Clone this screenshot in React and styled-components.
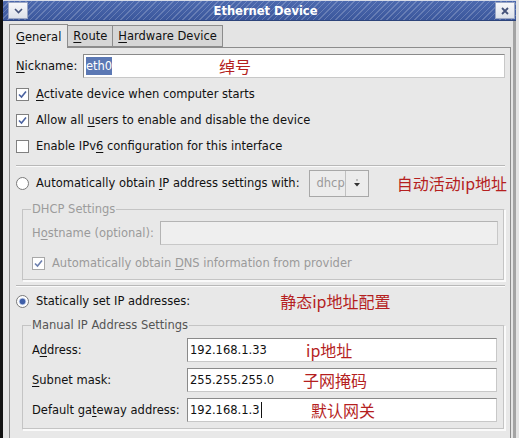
import React from "react";
import styled, { createGlobalStyle } from "styled-components";

const Global = createGlobalStyle`
  html, body { margin: 0; padding: 0; background: #1a1a1a; }
  body { font-family: "DejaVu Sans", "Noto Sans", sans-serif; }
`;

const Frame = styled.div`
  width: 519px;
  height: 438px;
  overflow: hidden;
  display: flex;
  background: #e4e4e4;
  border-left: 3px solid #111;
  padding-right: 3px;
  box-sizing: border-box;
`;

const Window = styled.div`
  flex: 1;
  display: flex;
  flex-direction: column;
  min-width: 0;
`;

const TitleBar = styled.div`
  height: 21px;
  flex: none;
  display: flex;
  align-items: center;
  justify-content: space-between;
  padding: 0 1px 0 5px;
  box-sizing: border-box;
  background: repeating-linear-gradient(
      135deg,
      rgba(255, 255, 255, 0.2) 0 1px,
      rgba(255, 255, 255, 0) 1px 4px
    ),
    linear-gradient(#4c69ae, #3b579c);
  border-top: 1px solid #d8dde8;
  border-bottom: 1px solid #2c437a;
`;

const TitleButton = styled.div`
  width: 20px;
  height: 17px;
  background: linear-gradient(#f6f7fa, #dde1ea);
  border: 1px solid #9aa6c4;
  box-sizing: border-box;
  display: flex;
  align-items: center;
  justify-content: center;
`;

const TitleText = styled.div`
  color: #fff;
  font-weight: bold;
  font-size: 11.5px;
  margin-left: 8px;
`;

const Body = styled.div`
  flex: 1;
  display: flex;
  flex-direction: column;
  padding: 2px 2px 0 6px;
  border-right: 3px solid #a4a4a4;
  min-height: 0;
`;

const TabRow = styled.div`
  display: flex;
  align-items: flex-end;
  height: 24px;
  flex: none;
`;

const Tab = styled.div`
  height: ${(p) => (p.$active ? 24 : 22)}px;
  box-sizing: border-box;
  padding: 0 ${(p) => p.$pad || 4}px;
  display: flex;
  align-items: center;
  font-size: 11.5px;
  color: #111;
  background: ${(p) => (p.$active ? "#e8e8e8" : "#d6d6d6")};
  border: 1px solid #8c8c8c;
  border-bottom: ${(p) => (p.$active ? "none" : "1px solid #8c8c8c")};
  margin-right: -1px;
  position: relative;
  z-index: ${(p) => (p.$active ? 2 : 1)};
  margin-bottom: ${(p) => (p.$active ? "-1px" : "0")};
`;

const Panel = styled.div`
  flex: 1;
  border: 1px solid #8c8c8c;
  border-bottom: none;
  background: #e8e8e8;
  padding: 5px 5px 0 6px;
  display: flex;
  flex-direction: column;
`;

const U = styled.span`
  text-decoration: underline;
  text-underline-offset: 2px;
`;

const Row = styled.div`
  display: flex;
  align-items: center;
  height: ${(p) => p.$h || 26}px;
  flex: none;
`;

const Spacer = styled.div`
  height: ${(p) => p.$h}px;
  flex: none;
`;

const Label = styled.span`
  font-size: 11.5px;
  color: ${(p) => (p.$dim ? "#9a9a9a" : "#111")};
  white-space: nowrap;
  width: ${(p) => (p.$w ? p.$w + "px" : "auto")};
  flex: none;
`;

const Entry = styled.div`
  flex: 1;
  height: 24px;
  box-sizing: border-box;
  border: 1px solid ${(p) => (p.$disabled ? "#b4b4b4" : "#8a8a8a")};
  border-right-color: #c8c8c8;
  border-bottom-color: #c8c8c8;
  background: ${(p) => (p.$disabled ? "#efefef" : "#fff")};
  display: flex;
  align-items: center;
  padding-left: 2px;
  font-size: 11.5px;
  color: #111;
  position: relative;
`;

const Selected = styled.span`
  background: #5b78b4;
  color: #fff;
  padding: 2px 0;
`;

const Note = styled.span`
  font-family: "Noto Sans CJK SC", sans-serif;
  color: #b51f1f;
  font-size: 16px;
  position: absolute;
  left: ${(p) => p.$x}px;
  top: 50%;
  transform: translateY(-48%);
  white-space: nowrap;
`;

const InlineNote = styled.span`
  font-family: "Noto Sans CJK SC", sans-serif;
  color: #b51f1f;
  font-size: 16px;
  margin-left: ${(p) => p.$ml || 0}px;
  white-space: nowrap;
`;

const Box = styled.span`
  width: 13px;
  height: 13px;
  box-sizing: border-box;
  border: 1px solid ${(p) => (p.$dim ? "#a8a8a8" : "#808080")};
  background: #fff;
  flex: none;
  margin-right: 7px;
  display: flex;
  align-items: center;
  justify-content: center;
`;

const Radio = styled.span`
  width: 13px;
  height: 13px;
  box-sizing: border-box;
  border-radius: 50%;
  border: 1px solid #7a7a7a;
  background: ${(p) =>
    p.$on
      ? "radial-gradient(circle, #3f5fa8 0 2.5px, #b9c7e6 3.2px, #fff 4.2px)"
      : "#fff"};
  flex: none;
  margin-right: 7px;
`;

const Separator = styled.div`
  height: 0;
  border-top: 1px solid #b8b8b8;
  border-bottom: 1px solid #fafafa;
  margin: ${(p) => p.$m || "0"};
  flex: none;
`;

const Group = styled.fieldset`
  margin: ${(p) => p.$m || "0"};
  padding: ${(p) => p.$p || "0 6px 0 9px"};
  border: 1px solid #c4c4c4;
  border-right-color: #fafafa;
  border-bottom-color: #fafafa;
  box-shadow: inset -1px -1px 0 #c4c4c4, 1px 1px 0 #fafafa;
  min-width: 0;
  flex: none;
`;

const Legend = styled.legend`
  font-size: 11.5px;
  line-height: 14px;
  color: ${(p) => (p.$dim ? "#9c9c9c" : "#555")};
  padding: 0 1px;
  margin-left: -1px;
`;

const Combo = styled.div`
  width: 66px;
  height: 27px;
  box-sizing: border-box;
  border: 1px solid #a8a8a8;
  background: #ececec;
  display: flex;
  align-items: center;
  font-size: 11.5px;
  color: #9a9a9a;
  margin-left: 9px;
`;

const ComboText = styled.span`
  flex: 1;
  padding-left: 7px;
`;

const ComboArrow = styled.span`
  width: 22px;
  height: 100%;
  border-left: 1px solid #c0c0c0;
  display: flex;
  align-items: center;
  justify-content: center;
`;

const Caret = styled.span`
  display: inline-block;
  width: 1px;
  height: 16px;
  background: #111;
  margin-left: 1px;
`;

const Check = ({ dim }) => (
  <svg width="11" height="11" viewBox="0 0 11 11">
    <path
      d="M2 5.5 L4.5 8 L9 2.5"
      fill="none"
      stroke={dim ? "#6c7fae" : "#4a62a0"}
      strokeWidth="1.6"
    />
  </svg>
);

export default function App() {
  return (
    <>
      <Global />
      <Frame>
        <Window>
          <TitleBar>
            <TitleButton>
              <svg width="9" height="6" viewBox="0 0 9 6">
                <path d="M1 1 L4.5 4.5 L8 1" fill="none" stroke="#44527a" strokeWidth="1.6" />
              </svg>
            </TitleButton>
            <TitleText>Ethernet Device</TitleText>
            <TitleButton>
              <svg width="8" height="8" viewBox="0 0 8 8">
                <path d="M1 1 L7 7 M7 1 L1 7" stroke="#44527a" strokeWidth="1.8" />
              </svg>
            </TitleButton>
          </TitleBar>
          <Body>
            <TabRow>
              <Tab $active $pad={6}>
                <U>G</U>eneral
              </Tab>
              <Tab $pad={5}>
                <U>R</U>oute
              </Tab>
              <Tab $pad={5}>
                <U>H</U>ardware Device
              </Tab>
            </TabRow>
            <Panel>
              <Row $h={25}>
                <Label $w={67}>
                  <U>N</U>ickname:
                </Label>
                <Entry>
                  <Selected>eth0</Selected>
                  <Note $x={135}>绰号</Note>
                </Entry>
              </Row>
              <Spacer $h={3} />
              <Row>
                <Box><Check /></Box>
                <Label>
                  <U>A</U>ctivate device when computer starts
                </Label>
              </Row>
              <Row>
                <Box><Check /></Box>
                <Label>
                  Allow all <U>u</U>sers to enable and disable the device
                </Label>
              </Row>
              <Row>
                <Box />
                <Label>
                  Enable IPv<U>6</U> configuration for this interface
                </Label>
              </Row>
              <Separator $m="6px 0 2px 0" />
              <Row $h={28}>
                <Radio />
                <Label>
                  Automatically obtain <U>I</U>P address settings with:
                </Label>
                <Combo>
                  <ComboText>dhcp</ComboText>
                  <ComboArrow>
                    <svg width="8" height="9" viewBox="0 0 8 9">
                      <path d="M3 1 L5 1" stroke="#888" />
                      <path d="M1 4 L7 4 L4 7.5 Z" fill="#333" />
                    </svg>
                  </ComboArrow>
                </Combo>
                <InlineNote $ml={28}>自动活动ip地址</InlineNote>
              </Row>
              <Group $m="5px 0 0 6px">
                <Legend $dim>DHCP Settings</Legend>
                <Spacer $h={4} />
                <Row $h={26}>
                  <Label $dim $w={128}>
                    H<U>o</U>stname (optional):
                  </Label>
                  <Entry $disabled />
                </Row>
                <Row $h={34}>
                  <Box $dim><Check dim /></Box>
                  <Label $dim>
                    Automatically obtain <U>D</U>NS information from provider
                  </Label>
                </Row>
              </Group>
              <Separator $m="4px 0 2px 0" />
              <Row $h={24}>
                <Radio $on />
                <Label>Statically set IP addresses:</Label>
                <InlineNote $ml={90}>静态ip地址配置</InlineNote>
              </Row>
              <Group $m="5px 0 0 6px" $p="0 7px 4px 9px">
                <Legend>Manual IP Address Settings</Legend>
                <Spacer $h={3} />
                <Row $h={30}>
                  <Label $w={155}>
                    A<U>d</U>dress:
                  </Label>
                  <Entry>
                    192.168.1.33
                    <Note $x={118}>ip地址</Note>
                  </Entry>
                </Row>
                <Row $h={30}>
                  <Label $w={155}>
                    <U>S</U>ubnet mask:
                  </Label>
                  <Entry>
                    255.255.255.0
                    <Note $x={115}>子网掩码</Note>
                  </Entry>
                </Row>
                <Row $h={30}>
                  <Label $w={155}>
                    Default ga<U>t</U>eway address:
                  </Label>
                  <Entry>
                    192.168.1.3
                    <Caret />
                    <Note $x={123}>默认网关</Note>
                  </Entry>
                </Row>
              </Group>
            </Panel>
          </Body>
        </Window>
      </Frame>
    </>
  );
}
